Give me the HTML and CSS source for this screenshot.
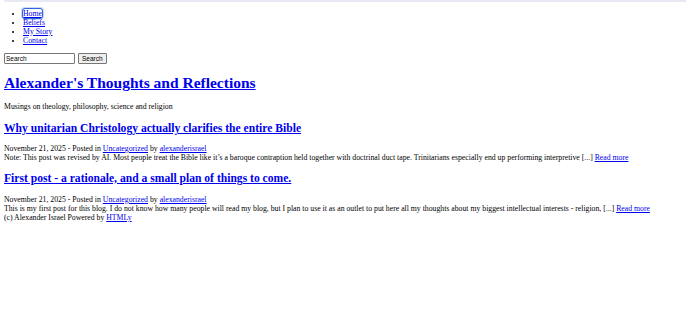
FILE: index.html
```html
<!DOCTYPE html>
<html lang="en">
<head>
  <meta charset="UTF-8" />
  <meta name="viewport" content="width=device-width, initial-scale=1" />
  <title>Alexander's Thoughts and Reflections</title>
  <link rel="stylesheet" href="styles.css">
</head>
<body>
  <div class="topbar"></div>
  <header>
    <nav>
      <ul class="menu">
        <li><a href="#" class="current">Home</a></li>
        <li><a href="#">Beliefs</a></li>
        <li><a href="#">My Story</a></li>
        <li><a href="#">Contact</a></li>
      </ul>
    </nav>
    <form class="search">
      <input type="text" value="Search">
      <button type="button">Search</button>
    </form>
    <h1><a href="#">Alexander's Thoughts and Reflections</a></h1>
    <p class="tagline">Musings on theology, philosophy, science and religion</p>
  </header>

  <main>
    <article>
      <h2><a href="#">Why unitarian Christology actually clarifies the entire Bible</a></h2>
      <div class="meta">November 21, 2025 - Posted in <a href="#">Uncategorized</a> by <a href="#">alexanderisrael</a></div>
      <p class="excerpt">Note: This post was revised by AI. Most people treat the Bible like it’s a baroque contraption held together with doctrinal duct tape. Trinitarians especially end up performing interpretive [...] <a href="#">Read more</a></p>
    </article>
    <article>
      <h2><a href="#">First post - a rationale, and a small plan of things to come.</a></h2>
      <div class="meta">November 21, 2025 - Posted in <a href="#">Uncategorized</a> by <a href="#">alexanderisrael</a></div>
      <p class="excerpt">This is my first post for this blog. I do not know how many people will read my blog, but I plan to use it as an outlet to put here all my thoughts about my biggest intellectual interests - religion, [...] <a href="#">Read more</a></p>
    </article>
  </main>

  <footer>(c) Alexander Israel Powered by <a href="#">HTMLy</a></footer>
</body>
</html>
```

FILE: styles.css
```css
body {
  font-family: "Liberation Serif", "Times New Roman", serif;
  font-size: 7.75px;
  line-height: 9px;
  margin: 0 4px 4px;
  color: #000;
  background: #fff;
}
a {
  color: #0000ee;
}
.topbar {
  height: 2px;
  margin: 0 -4px;
  background: #e9e9f6;
}
.menu {
  margin: 6.5px 0 8.5px;
  padding-left: 19px;
}
.menu .current {
  outline: 1px solid #2f66dc;
  outline-offset: 0;
  border-radius: 2px;
  box-shadow: 0 0 0 2px #c9d8f7;
}
.search {
  margin: 0;
  height: 11px;
}
.search input {
  font-family: "Liberation Sans", Arial, sans-serif;
  font-size: 6.5px;
  width: 67px;
  height: 9px;
  padding: 0 1px;
  margin: 0;
  border: 1px solid #767676;
  border-radius: 1px;
  vertical-align: top;
}
.search button {
  font-family: "Liberation Sans", Arial, sans-serif;
  font-size: 6.5px;
  height: 11px;
  padding: 0 3px;
  margin: 0 0 0 1px;
  border: 1px solid #767676;
  border-radius: 1px;
  background: #efefef;
  vertical-align: top;
}
h1 {
  font-size: 15.5px;
  line-height: 18px;
  margin: 10px 0 9.5px;
}
.tagline {
  margin: 0 0 11px;
}
h2 {
  font-size: 11.6px;
  line-height: 13px;
  margin: 10px 0 9.5px;
}
.excerpt {
  margin: 0;
}
```
